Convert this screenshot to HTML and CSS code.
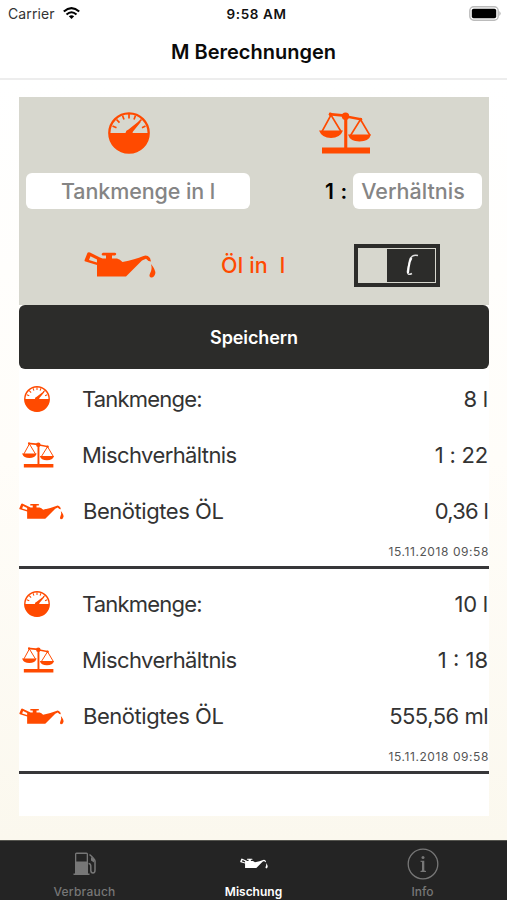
FILE: index.html
```html
<!DOCTYPE html>
<html lang="de">
<head>
<meta charset="utf-8">
<title>M Berechnungen</title>
<link rel="stylesheet" href="styles.css">
</head>
<body>
<svg class="sprite" aria-hidden="true">
  <symbol id="gauge" viewBox="0 0 42 42">
    <circle cx="21" cy="21" r="19.7" fill="none" stroke="currentColor" stroke-width="2.3"/>
    <path d="M1 21H17.5A4 4 0 0 1 20.5 17.5L31.5 8.7L32.8 10L25 19.500L24.500 21H41A20 20 0 0 1 1 21Z" fill="currentColor"/>
    <path d="M21 2V6.5M14.5 3.5L16 7.5M8.5 7.5L11.5 10.7M4.5 14L8.5 15.7M27.5 3.5L26 7.5M33.5 7.5L31 10M37.5 14L34 15.7" stroke="currentColor" stroke-width="1.7"/>
  </symbol>
  <symbol id="scale" viewBox="0 0 52 42">
    <path d="M12 3L3 19.500M12 3L22 19.500M41.500 7.500L31.500 23.500M41.500 7.500L51 23.500" fill="none" stroke="currentColor" stroke-width="1.600"/>
    <path d="M10 .8L26 2.200V5L10 3.400ZM26 3L43 6.200V8.800L26 5.500ZM25.200 3H28.300V37H25.200Z" fill="currentColor"/>
    <circle cx="26.500" cy="4.200" r="3.700" fill="currentColor"/>
    <circle cx="11.500" cy="2.300" r="1.800" fill="currentColor"/>
    <circle cx="41.500" cy="7.500" r="1.800" fill="currentColor"/>
    <path d="M0 18.500H24Q21 26 12 26T0 18.500ZM29 22.500H52Q50 29.500 40.500 29.500T29 22.500ZM3 35.500H51V41.500H3Z" fill="currentColor"/>
  </symbol>
  <symbol id="oil" viewBox="0 0 72 26">
    <path fill-rule="evenodd" d="M3.500 .8Q4.200 0 6 .5L16 5.500L18.500 6.500H22V3.500H18.500Q16.500 2 19 .8H31Q33.500 2 31 3.500H28V6.500H33Q36 7 38.500 10Q51 7.500 59.500 4Q63 2.500 66 6L67 9.500L64.500 9L62 6.700L58 8.500L42 24.500H13V13L1.500 9.500Q0 9 .8 7.500ZM6.500 4.300L5 8L13 10.500V7.500Z" fill="currentColor"/>
    <path d="M67 12Q71.800 18 71.300 21.500Q70 26 67 25.500Q64.500 24.500 66 21.500Q68.500 17.500 67 12Z" fill="currentColor"/>
  </symbol>
</svg>

<header class="top">
  <div class="status">
    <div class="carrier"><span>Carrier</span>
      <svg class="wifi" viewBox="0 0 17 12"><g fill="none" stroke="#000" stroke-width="2.100"><path d="M.8 4.500Q8.500 -2.200 16.200 4.500"/><path d="M3.500 7.500Q8.500 3 13.500 7.500"/></g><path d="M5.800 9.300Q8.500 7.200 11.200 9.300L8.500 12Z"/></svg>
    </div>
    <span class="time">9:58 AM</span>
    <svg class="battery" viewBox="0 0 33 15"><rect x="1.800" y=".8" width="28.400" height="13.400" rx="4" fill="#fff" stroke="#bbb" stroke-width="1.400"/><rect x="3.800" y="2.800" width="24.400" height="9.400" rx="1.800"/><path d="M31.500 5Q33.500 7.500 31.500 10Z" fill="#999"/></svg>
  </div>
  <h1><span>M Berechnungen</span></h1>
</header>

<main>
  <section class="panel">
    <div class="symbols">
      <svg class="gauge-lg"><use href="#gauge"/></svg>
      <svg class="scale-lg"><use href="#scale"/></svg>
    </div>
    <div class="fields">
      <div class="field tank"><span>Tankmenge in l</span></div>
      <span class="one">1 :</span>
      <div class="field ratio"><span>Verhältnis</span></div>
    </div>
    <div class="result">
      <svg class="oil-lg"><use href="#oil"/></svg>
      <span class="oil-text">Öl in&nbsp; l</span>
      <div class="switch"><div class="track"><span class="knob"><svg viewBox="0 0 16 24"><path d="M15 2.500Q8 1 6.500 8L4.500 18Q4 23 9 20.500" fill="none" stroke="#ddd" stroke-width="1.500"/><path d="M8.500 5Q6.500 8 5.700 14L5 20" fill="none" stroke="#fff" stroke-width="2"/></svg></span></div></div>
    </div>
  </section>
  <div class="save"><span>Speichern</span></div>
  <section class="list">
    <article>
      <div class="row"><svg class="gauge-sm"><use href="#gauge"/></svg><span class="label l1">Tankmenge:</span><span class="value v1">8 l</span></div>
      <div class="row"><svg class="scale-sm"><use href="#scale"/></svg><span class="label l2">Mischverhältnis</span><span class="value v2">1 : 22</span></div>
      <div class="row"><svg class="oil-sm"><use href="#oil"/></svg><span class="label l3">Benötigtes ÖL</span><span class="value v3">0,36 l</span></div>
      <time>15.11.2018 09:58</time>
    </article>
    <article>
      <div class="row"><svg class="gauge-sm"><use href="#gauge"/></svg><span class="label l1">Tankmenge:</span><span class="value v4">10 l</span></div>
      <div class="row"><svg class="scale-sm"><use href="#scale"/></svg><span class="label l2">Mischverhältnis</span><span class="value v5">1 : 18</span></div>
      <div class="row"><svg class="oil-sm"><use href="#oil"/></svg><span class="label l3">Benötigtes ÖL</span><span class="value v6">555,56 ml</span></div>
      <time>15.11.2018 09:58</time>
    </article>
  </section>
</main>

<nav class="tabs">
  <div class="tab">
    <svg class="pump" viewBox="0 0 24 24"><path fill-rule="evenodd" d="M2 2Q2 .5 3.500 .5H13.500Q15 .5 15 2V21.500H16.500V23H.5V21.500H2ZM3.300 2V9.500H13.700V2Z" fill="currentColor"/><path d="M15.500 11.500Q18 11.500 17.800 15V18.500Q18 21 20 21T22 18V9Q22 7 16.500 2.500" fill="none" stroke="currentColor" stroke-width="1.500"/><path d="M18 5V8.500L21 10.500V7Z" fill="currentColor"/></svg>
    <span class="verbrauch">Verbrauch</span>
  </div>
  <div class="tab active">
    <svg class="oil-tab"><use href="#oil"/></svg>
    <span>Mischung</span>
  </div>
  <div class="tab">
    <svg class="info" viewBox="0 0 32 32"><circle cx="16" cy="16" r="14.800" fill="none" stroke="currentColor" stroke-width="1.300"/><circle cx="16" cy="9.500" r="1.500" fill="currentColor"/><path d="M13.500 12.800H17.300V22.500L19 23V24H13.500V23L15 22.500V14L13.500 13.700Z" fill="currentColor"/></svg>
    <span>Info</span>
  </div>
</nav>
</body>
</html>
```
FILE: styles.css
```css
* { box-sizing: border-box; }
body {
  margin: 0;
  width: 507px;
  height: 900px;
  display: flex;
  flex-direction: column;
  overflow: hidden;
  background: #fff;
  color: #333;
  font-family: Inter, "Liberation Sans", sans-serif;
}
svg { display: block; flex: none; }
span, time { white-space: pre; }
.sprite { position: absolute; width: 0; height: 0; }

.top { height: 80px; border-bottom: 2px solid #ededed; background: #fff; }
.status {
  height: 28px;
  padding: 0 6px 0 8px;
  display: grid;
  grid-template-columns: 1fr auto 1fr;
  align-items: center;
  color: #111;
}
.carrier { display: flex; align-items: center; gap: 8px; font-size: 14px; letter-spacing: .1px; color: #333; }
.carrier span { margin-top: -1px; }
.wifi { width: 17px; height: 12px; margin-top: -2px; }
.time { font-size: 13.5px; font-weight: 600; letter-spacing: .6px; margin: -1px 0 0 4px; }
.battery { width: 33px; height: 15px; margin-top: -2px; justify-self: end; }
h1 {
  margin: 0;
  height: 48px;
  display: flex;
  justify-content: center;
  align-items: center;
  font-size: 20px;
  font-weight: 600;
  color: #0a0a0a;
}

main {
  height: 760px;
  padding: 17px 18px 0 19px;
  background: linear-gradient(#fff, #fffdf9 50%, #fbf8ee);
}
.panel { height: 208px; background: #d7d7ce; color: #ff4a00; }
.symbols { height: 76px; padding: 15px 0 0 89px; display: flex; gap: 169px; }
.gauge-lg { width: 42px; height: 42px; }
.scale-lg { width: 52px; height: 42px; }
.fields { display: flex; align-items: center; height: 36px; padding: 0 7px; }
.field {
  height: 36px;
  border-radius: 6px;
  background: #fff;
  color: #858585;
  font-size: 21.5px;
  font-weight: 500;
  display: flex;
  align-items: center;
  justify-content: center;
}
.tank { width: 224px; letter-spacing: -.1px; }
.ratio { width: 129px; padding-right: 9px; }
.one { width: 103px; padding-right: 5px; text-align: right; color: #000; font-size: 21px; font-weight: 600; letter-spacing: .7px; }
.result { height: 96px; display: flex; align-items: center; padding: 16px 0 0 65px; }
.oil-lg { width: 72px; height: 26px; }
.oil-text { width: 133px; margin-left: 65px; font-size: 21.5px; font-weight: 500; letter-spacing: .2px; }
.switch { width: 86px; height: 43px; border: 4px solid #2c2c2a; padding: 1px; }
.track { height: 100%; display: flex; justify-content: flex-end; }
.knob { width: 48px; height: 33px; display: flex; justify-content: center; align-items: center; background: #2c2c2a; }
.knob svg { width: 16px; height: 24px; }

.save {
  height: 64px;
  border-radius: 6px;
  background: #2c2c2a;
  color: #fff;
  font-size: 18px;
  font-weight: 600;
  letter-spacing: -.1px;
  display: flex;
  align-items: center;
  justify-content: center;
}
.list { height: 447px; background: #fff; padding-top: 2px; }
article { height: 197.500px; border-bottom: 3px solid #373739; margin-bottom: 7.500px; }
.row { height: 56px; display: grid; grid-template-columns: 63px 1fr auto; align-items: center; font-size: 22px; padding-right: 1px; }
.row svg { color: #ff4a00; }
.gauge-sm { width: 26px; height: 26px; margin-left: 5px; }
.scale-sm { width: 32px; height: 26px; margin-left: 3px; }
.oil-sm { width: 45px; height: 17px; }
.l1 { letter-spacing: -.8px; }
.l2 { letter-spacing: -.6px; }
.l3 { padding-left: 1px; letter-spacing: -.45px; }
.value { letter-spacing: -.2px; }
.v3 { letter-spacing: -.75px; }
.v5 { letter-spacing: 0; }
.v6 { letter-spacing: -.5px; }
time { display: block; height: 26px; line-height: 26px; font-size: 12px; letter-spacing: .58px; color: #555; text-align: right; }

.tabs {
  height: 60px;
  background: #242424;
  border-top: 1px solid #55554f;
  display: grid;
  grid-template-columns: repeat(3, 169px);
}
.tab { color: #777; display: grid; grid-template-rows: 42px 14px; justify-items: center; align-items: center; font-size: 12px; font-weight: 500; padding-top: 1px; }
.active { color: #fff; font-weight: 600; }
.verbrauch { letter-spacing: .25px; }
.pump { width: 24px; height: 24px; margin-top: 2px; }
.oil-tab { width: 28px; height: 11px; }
.info { width: 32px; height: 32px; margin-top: 1px; }
```
